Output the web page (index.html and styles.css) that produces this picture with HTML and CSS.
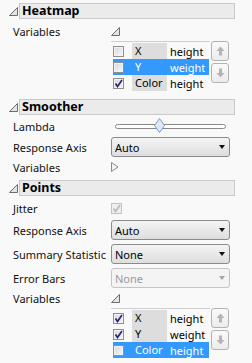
FILE: index.html
```html
<!DOCTYPE html>
<html lang="en">
<head>
  <meta charset="UTF-8">
  <title>Graph Builder - Element Properties</title>
  <link rel="stylesheet" href="styles.css">
</head>
<body>
  <div class="panel">

    <!-- Heatmap -->
    <div class="sec">
      <div class="sec-head">
        <svg class="disc" width="9" height="9" viewBox="0 0 9 9"><polygon points="0.5,8.5 8.5,0.5 8.5,8.5"/></svg>
        <div class="sec-title">Heatmap</div>
      </div>
      <div class="row row-first">
        <span class="lbl">Variables</span>
        <svg class="disc" width="9" height="9" viewBox="0 0 9 9"><polygon points="0.5,8.5 8.5,0.5 8.5,8.5"/></svg>
      </div>
      <div class="vars">
        <div class="list">
          <div class="item"><span class="cb"></span><span class="role">X</span><span class="col">height</span></div>
          <div class="item sel"><span class="cb"></span><span class="role">Y</span><span class="col">weight</span></div>
          <div class="item"><span class="cb on"><svg width="9" height="9" viewBox="0 0 9 9"><polyline points="1.5,4.5 3.5,7.5 8,1"/></svg></span><span class="role">Color</span><span class="col">height</span></div>
        </div>
        <div class="movers">
          <button class="mv"><svg width="9" height="10" viewBox="0 0 9 10"><path d="M4.5 0.5 L8.5 5 L6 5 L6 9.5 L3 9.5 L3 5 L0.5 5 Z"/></svg></button>
          <button class="mv"><svg width="9" height="10" viewBox="0 0 9 10"><path d="M4.5 9.5 L8.5 5 L6 5 L6 0.5 L3 0.5 L3 5 L0.5 5 Z"/></svg></button>
        </div>
      </div>
    </div>

    <!-- Smoother -->
    <div class="sec">
      <div class="sec-head">
        <svg class="disc" width="9" height="9" viewBox="0 0 9 9"><polygon points="0.5,8.5 8.5,0.5 8.5,8.5"/></svg>
        <div class="sec-title">Smoother</div>
      </div>
      <div class="row row-first row-slider">
        <span class="lbl">Lambda</span>
        <div class="slider">
          <div class="track"></div>
          <svg class="thumb" style="left: 40%" width="11" height="15" viewBox="0 0 11 15"><polygon points="5.5,0.5 10.5,7.5 5.5,14.5 0.5,7.5"/></svg>
        </div>
      </div>
      <div class="row row-ctl">
        <span class="lbl">Response Axis</span>
        <div class="combo"><span>Auto</span><i class="arrow"></i></div>
      </div>
      <div class="row row-after">
        <span class="lbl">Variables</span>
        <svg class="disc closed" width="8" height="10" viewBox="0 0 8 10"><polygon points="0.5,0.5 7,5 0.5,9.5"/></svg>
      </div>
    </div>

    <!-- Points -->
    <div class="sec">
      <div class="sec-head">
        <svg class="disc" width="9" height="9" viewBox="0 0 9 9"><polygon points="0.5,8.5 8.5,0.5 8.5,8.5"/></svg>
        <div class="sec-title">Points</div>
      </div>
      <div class="row row-first">
        <span class="lbl">Jitter</span>
        <span class="cb on off"><svg width="9" height="9" viewBox="0 0 9 9"><polyline points="1.5,4.5 3.5,7.5 8,1"/></svg></span>
      </div>
      <div class="row row-ctl">
        <span class="lbl">Response Axis</span>
        <div class="combo"><span>Auto</span><i class="arrow"></i></div>
      </div>
      <div class="row row-ctl">
        <span class="lbl">Summary Statistic</span>
        <div class="combo"><span>None</span><i class="arrow"></i></div>
      </div>
      <div class="row row-ctl">
        <span class="lbl">Error Bars</span>
        <div class="combo off"><span>None</span><i class="arrow"></i></div>
      </div>
      <div class="row row-after">
        <span class="lbl">Variables</span>
        <svg class="disc" width="9" height="9" viewBox="0 0 9 9"><polygon points="0.5,8.5 8.5,0.5 8.5,8.5"/></svg>
      </div>
      <div class="vars">
        <div class="list">
          <div class="item"><span class="cb on"><svg width="9" height="9" viewBox="0 0 9 9"><polyline points="1.5,4.5 3.5,7.5 8,1"/></svg></span><span class="role">X</span><span class="col">height</span></div>
          <div class="item"><span class="cb on"><svg width="9" height="9" viewBox="0 0 9 9"><polyline points="1.5,4.5 3.5,7.5 8,1"/></svg></span><span class="role">Y</span><span class="col">weight</span></div>
          <div class="item sel"><span class="cb"></span><span class="role">Color</span><span class="col">height</span></div>
        </div>
        <div class="movers">
          <button class="mv"><svg width="9" height="10" viewBox="0 0 9 10"><path d="M4.5 0.5 L8.5 5 L6 5 L6 9.5 L3 9.5 L3 5 L0.5 5 Z"/></svg></button>
          <button class="mv"><svg width="9" height="10" viewBox="0 0 9 10"><path d="M4.5 9.5 L8.5 5 L6 5 L6 0.5 L3 0.5 L3 5 L0.5 5 Z"/></svg></button>
        </div>
      </div>
    </div>

  </div>
</body>
</html>
```

FILE: styles.css
```css
html, body {
  margin: 0;
  padding: 0;
  background: #f9f9f9;
  font-family: "Noto Sans", "Open Sans", sans-serif;
  font-size: 11px;
  color: #111;
}

.panel {
  width: 252px;
  height: 363px;
  box-sizing: border-box;
  padding: 3px 17px 0 9px;
  overflow: hidden;
}

/* section header: outline box with a disclosure triangle */
.sec {
  padding-bottom: 5px;
}

.sec-head {
  display: flex;
  align-items: center;
  gap: 1px;
}

.sec-title {
  flex: 1;
  height: 16px;
  box-sizing: border-box;
  border: 1px solid #c9c9c9;
  background: #ebebeb;
  padding-left: 2px;
  font-weight: bold;
  font-size: 12.5px;
  line-height: 14px;
  color: #000;
}

.disc polygon {
  fill: #e4e4e4;
  stroke: #6d6d6d;
  stroke-width: 1;
}

.disc.closed polygon {
  fill: #f4f4f4;
  stroke: #8a8a8a;
}

/* label + control rows */
.row {
  display: flex;
  align-items: center;
  height: 16px;
  margin-top: 1px;
  padding-left: 4px;
}

.row-first {
  margin-top: 4px;
}

.row-slider {
  height: 14px;
}

.row-ctl {
  height: 20px;
  margin-top: 4px;
}

.row-after {
  margin-top: 2px;
}

.lbl {
  width: 98px;
  flex: none;
  white-space: nowrap;
}

/* checkbox */
.cb {
  width: 11px;
  height: 11px;
  box-sizing: border-box;
  flex: none;
  border: 1px solid #8f8f8f;
  background: linear-gradient(135deg, #d8d8d8, #f6f6f6);
  box-shadow: inset 0 0 0 1px #f2f2f2;
  display: flex;
  align-items: center;
  justify-content: center;
}

.cb svg polyline {
  fill: none;
  stroke: #26267a;
  stroke-width: 1.7;
}

.cb.off {
  border-color: #c2c2c2;
  background: #efefef;
  box-shadow: none;
}

.cb.off svg polyline {
  stroke: #b9b9b9;
}

/* slider */
.slider {
  position: relative;
  width: 111px;
  height: 14px;
  margin-left: 4px;
  display: flex;
  align-items: center;
}

.track {
  width: 100%;
  height: 5px;
  box-sizing: border-box;
  border: 1px solid #8a8a8a;
  border-radius: 3px;
  background: #fff;
}

.thumb {
  position: absolute;
  top: -1px;
  margin-left: -5px;
}

.thumb polygon {
  fill: #dce9f7;
  stroke: #7a9cc4;
}

/* combo box */
.combo {
  width: 119px;
  height: 20px;
  box-sizing: border-box;
  border: 1px solid #8b8b8b;
  border-radius: 3px;
  background: linear-gradient(#f4f4f4, #dedede);
  display: flex;
  align-items: center;
  justify-content: space-between;
  padding: 0 4px 0 3px;
  color: #000;
}

.arrow {
  width: 0;
  height: 0;
  border-left: 3.5px solid transparent;
  border-right: 3.5px solid transparent;
  border-top: 4px solid #111;
}

.combo.off {
  border-color: #c4c4c4;
  background: #f4f4f4;
  color: #9b9b9b;
}

.combo.off .arrow {
  border-top-color: #a3a3a3;
}

/* variable role list */
.vars {
  display: flex;
  margin-top: 2px;
  margin-bottom: 3px;
  margin-left: 102px;
}

.list {
  width: 99px;
  border-top: 1px solid #cfcfcf;
  padding-top: 1px;
}

.item {
  display: flex;
  align-items: center;
  height: 16px;
  margin-left: 2px;
  width: 96px;
  color: #000;
}

.item .role {
  margin-left: 8px;
  width: 35px;
  height: 16px;
  line-height: 16px;
  box-sizing: border-box;
  padding-left: 3px;
  background: #dddddd;
}

.item .col {
  padding-left: 3px;
}

.item.sel {
  background: #3399ff;
  color: #fff;
}

.item.sel .role {
  background: transparent;
}

.movers {
  display: flex;
  flex-direction: column;
  gap: 2px;
  margin-left: 1px;
}

.mv {
  width: 18px;
  height: 20px;
  padding: 0;
  border: 1px solid #b3b3b3;
  border-radius: 3px;
  background: linear-gradient(#fafafa, #ececec);
  display: flex;
  align-items: center;
  justify-content: center;
}

.mv path {
  fill: #b4b4b4;
}
```
